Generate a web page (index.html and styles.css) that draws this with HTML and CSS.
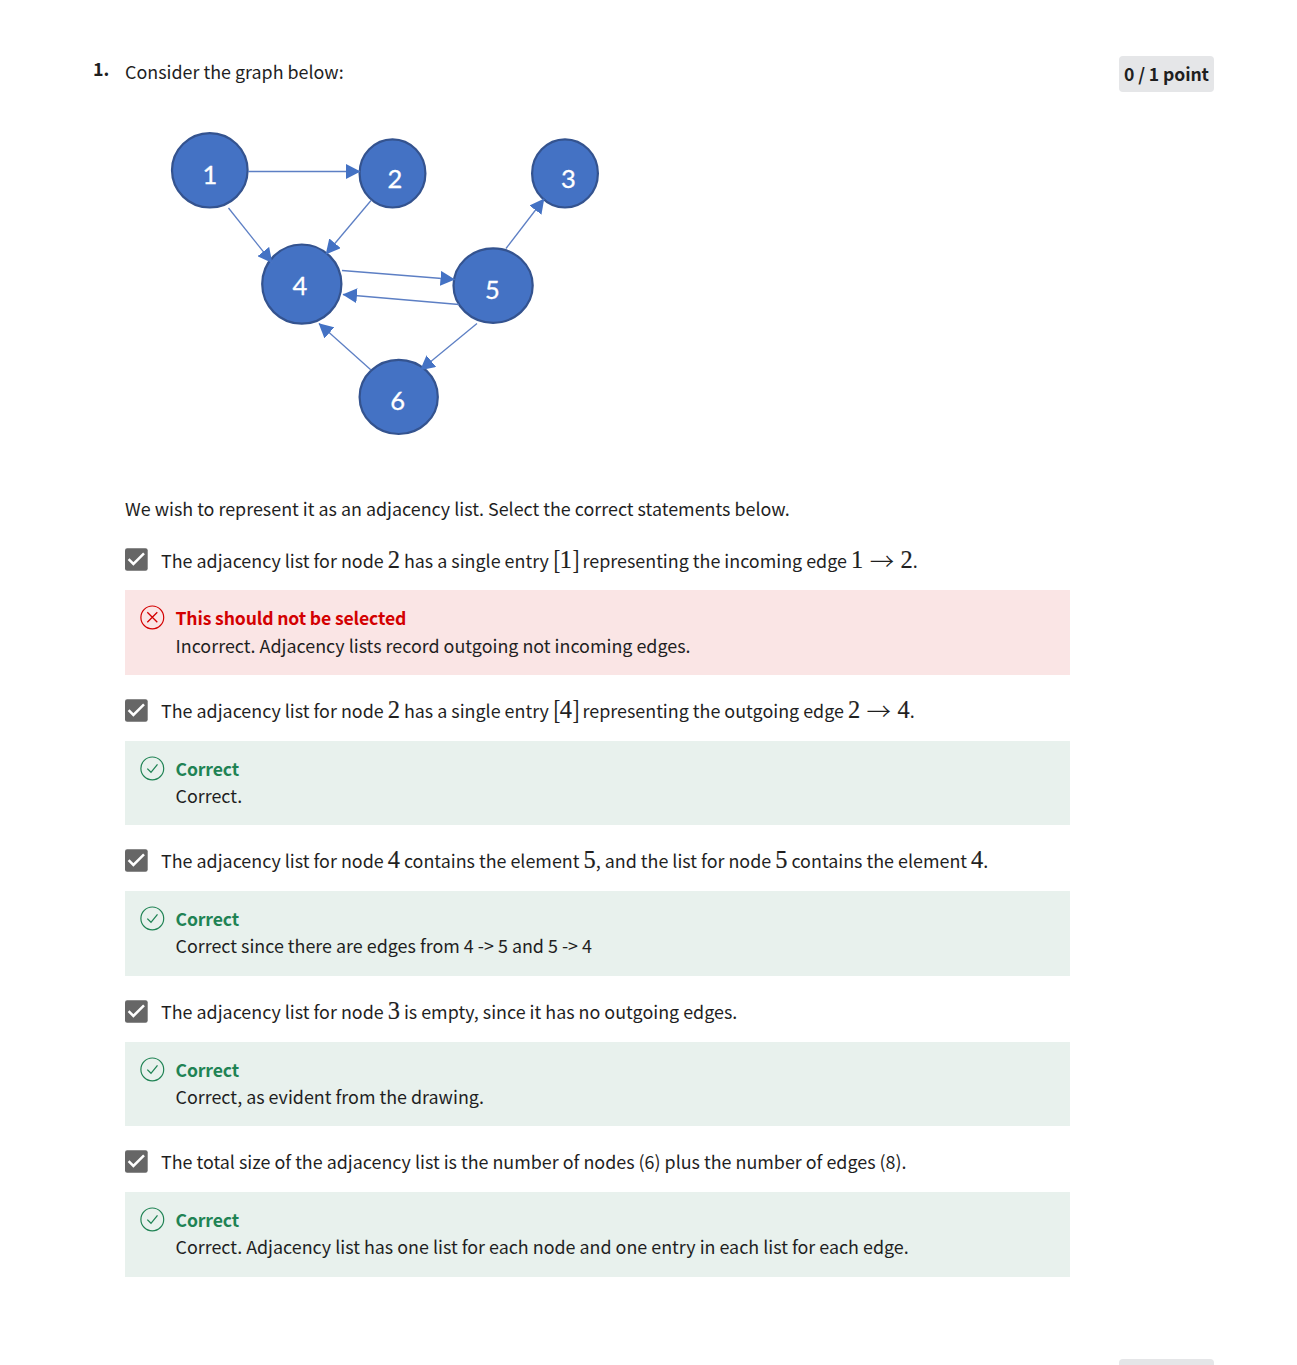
FILE: index.html
```html
<!DOCTYPE html>
<html lang="en">
<head>
<meta charset="utf-8">
<title>Quiz: Graph representation</title>
<link rel="stylesheet" href="styles.css">
</head>
<body>
<svg class="defs" width="0" height="0" aria-hidden="true">
  <symbol id="checkbox" viewBox="0 0 23 23">
    <rect x="0" y="0.2" width="22.7" height="22.6" rx="2.2" fill="#666"/>
    <path d="M3.6 11.2 8.4 16 19 5.4" fill="none" stroke="#fff" stroke-width="2.5"/>
  </symbol>
  <symbol id="ok" viewBox="0 0 25 25">
    <circle cx="12.3" cy="12.4" r="11.4" fill="none" stroke="currentColor" stroke-width="1.2"/>
    <path d="M7.3 12.6 11 16.3 17.5 8.3" fill="none" stroke="currentColor" stroke-width="1.3"/>
  </symbol>
  <symbol id="bad" viewBox="0 0 25 25">
    <circle cx="12.3" cy="12.4" r="11.4" fill="none" stroke="currentColor" stroke-width="1.2"/>
    <path d="M7.3 7.3 17.3 17.3M17.3 7.3 7.3 17.3" fill="none" stroke="currentColor" stroke-width="1.3"/>
  </symbol>
</svg>
<main class="page">
  <section class="question">
    <div class="number">1.</div>
    <div class="body">
      <p class="prompt">Consider the graph below:</p>
      <svg class="graph" viewBox="125 110 500 350" width="500" height="350">
        <defs>
          <marker id="head" markerUnits="userSpaceOnUse" markerWidth="15" markerHeight="15" refX="14" refY="7.5" orient="auto">
            <path d="M0 0 14.5 7.5 0 15Z" fill="#4472c4"/>
          </marker>
        </defs>
        <g class="nodes">
          <ellipse cx="209.8" cy="170.3" rx="37.8" ry="37.2"/>
          <ellipse cx="392.5" cy="173.4" rx="32.9" ry="34.1"/>
          <ellipse cx="565" cy="173.4" rx="32.9" ry="34.1"/>
          <ellipse cx="301.8" cy="284.1" rx="39.6" ry="39.6"/>
          <ellipse cx="493.1" cy="285.6" rx="39.6" ry="37.2"/>
          <ellipse cx="398.7" cy="396.9" rx="39.1" ry="37.1"/>
        </g>
        <g class="edges">
          <path d="M248 171.5H360"/>
          <path d="M228.5 208 272 262.5"/>
          <path d="M371 200.5 326 254"/>
          <path d="M342 270.5 454.5 279.5"/>
          <path d="M459 304.5 343 294.5"/>
          <path d="M506 248.5 544 199"/>
          <path d="M477 323.5 420.5 370"/>
          <path d="M371 370 319 323.5"/>
        </g>
        <g class="labels">
          <text x="210" y="183.5">1</text>
          <text x="395" y="188">2</text>
          <text x="568.5" y="188">3</text>
          <text x="300" y="295">4</text>
          <text x="492.5" y="298.5">5</text>
          <text x="397.7" y="410">6</text>
        </g>
      </svg>
      <p class="prompt second">We wish to represent it as an adjacency list. Select the correct statements below.</p>

      <div class="option">
        <svg class="box"><use href="#checkbox"/></svg>
        <p>The adjacency list for node <span class="m">2</span> has a single entry <span class="m"><span class="br">[</span>1<span class="br">]</span></span> representing the incoming edge <span class="m">1<span class="arrow">→</span>2</span>.</p>
      </div>
      <div class="feedback wrong">
        <svg class="mark"><use href="#bad"/></svg>
        <div><strong>This should not be selected</strong><p>Incorrect. Adjacency lists record outgoing not incoming edges.</p></div>
      </div>

      <div class="option">
        <svg class="box"><use href="#checkbox"/></svg>
        <p>The adjacency list for node <span class="m">2</span> has a single entry <span class="m"><span class="br">[</span>4<span class="br">]</span></span> representing the outgoing edge <span class="m">2<span class="arrow">→</span>4</span>.</p>
      </div>
      <div class="feedback">
        <svg class="mark"><use href="#ok"/></svg>
        <div><strong>Correct</strong><p>Correct.</p></div>
      </div>

      <div class="option">
        <svg class="box"><use href="#checkbox"/></svg>
        <p>The adjacency list for node <span class="m">4</span> contains the element <span class="m">5</span>, and the list for node <span class="m">5</span> contains the element <span class="m">4</span>.</p>
      </div>
      <div class="feedback">
        <svg class="mark"><use href="#ok"/></svg>
        <div><strong>Correct</strong><p>Correct since there are edges from 4 -&gt; 5 and 5 -&gt; 4</p></div>
      </div>

      <div class="option">
        <svg class="box"><use href="#checkbox"/></svg>
        <p>The adjacency list for node <span class="m">3</span> is empty, since it has no outgoing edges.</p>
      </div>
      <div class="feedback">
        <svg class="mark"><use href="#ok"/></svg>
        <div><strong>Correct</strong><p>Correct, as evident from the drawing.</p></div>
      </div>

      <div class="option">
        <svg class="box"><use href="#checkbox"/></svg>
        <p>The total size of the adjacency list is the number of nodes (6) plus the number of edges (8).</p>
      </div>
      <div class="feedback">
        <svg class="mark"><use href="#ok"/></svg>
        <div><strong>Correct</strong><p>Correct. Adjacency list has one list for each node and one entry in each list for each edge.</p></div>
      </div>
    </div>
    <div class="points">0 / 1 point</div>
  </section>
  <section class="next"><div class="points"></div></section>
</main>
</body>
</html>
```
FILE: styles.css
```css
* { box-sizing: border-box; }
body {
  margin: 0;
  background: #fff;
  color: #1f1f1f;
  font-family: "Noto Sans CJK SC", "Open Sans", sans-serif;
  font-size: 17.9px;
  line-height: 28px;
}
p { margin: 0; white-space: nowrap; }
.defs { display: block; }
.page { height: 1365px; overflow: hidden; padding: 56px 83px 0 93px; }
.question { display: flex; height: 1303px; }
.number { width: 32px; font-weight: 700; line-height: 24px; }
.body { width: 945px; }
.prompt { height: 28px; margin-top: 1px; }
.graph { display: block; margin-top: 25px; }
.second { margin-top: 34px; }
.option { display: flex; height: 66px; padding-top: 24px; }
.second + .option { height: 68px; padding-top: 26px; }
.box { width: 23px; height: 23px; margin-right: 13px; }
.option p { height: 28px; margin-top: -2.6px; }
.second + .option p { margin-top: -2px; }
.m {
  display: inline-block;
  height: 20px;
  font-family: "Liberation Serif", serif;
  font-size: 24.4px;
  line-height: 20px;
  -webkit-text-stroke: 0.2px currentColor;
}
.br {
  display: inline-block;
  width: 6.7px;
  transform: scale(0.85, 1.12);
  transform-origin: 50% 60%;
  -webkit-text-stroke: 0;
}
.arrow {
  display: inline-block;
  width: 37.4px;
  transform: translateY(2px);
  font-family: "Noto Sans CJK SC", sans-serif;
  font-weight: 300;
  text-align: center;
  -webkit-text-stroke: 0;
}
.feedback { display: flex; height: 84.5px; padding: 14px 15px 12px; background: #e8f1ed; color: #1f8354; }
.wrong { background: #fae5e5; color: #d30001; }
.mark { width: 25px; height: 25px; margin: 1px 10.5px 0 0; }
.feedback strong { display: block; height: 26.4px; font-size: 17.6px; letter-spacing: -0.14px; }
.feedback p { color: #1f1f1f; }
.wrong strong { height: 27px; }
.points {
  width: 95px;
  height: 36px;
  margin-left: auto;
  border-radius: 4px;
  background: #e5e6e8;
  text-align: center;
  font-size: 17.6px;
  font-weight: 700;
  letter-spacing: -0.1px;
  line-height: 36px;
  white-space: nowrap;
}
.nodes { fill: #4472c4; stroke: #34538f; stroke-width: 2.2; }
.edges path { fill: none; stroke: #5d7fc4; stroke-width: 1.3; marker-end: url(#head); }
.labels { fill: #fff; stroke: #fff; stroke-width: 0.3; font-family: Lato, sans-serif; font-size: 25.5px; text-anchor: middle; }
```
